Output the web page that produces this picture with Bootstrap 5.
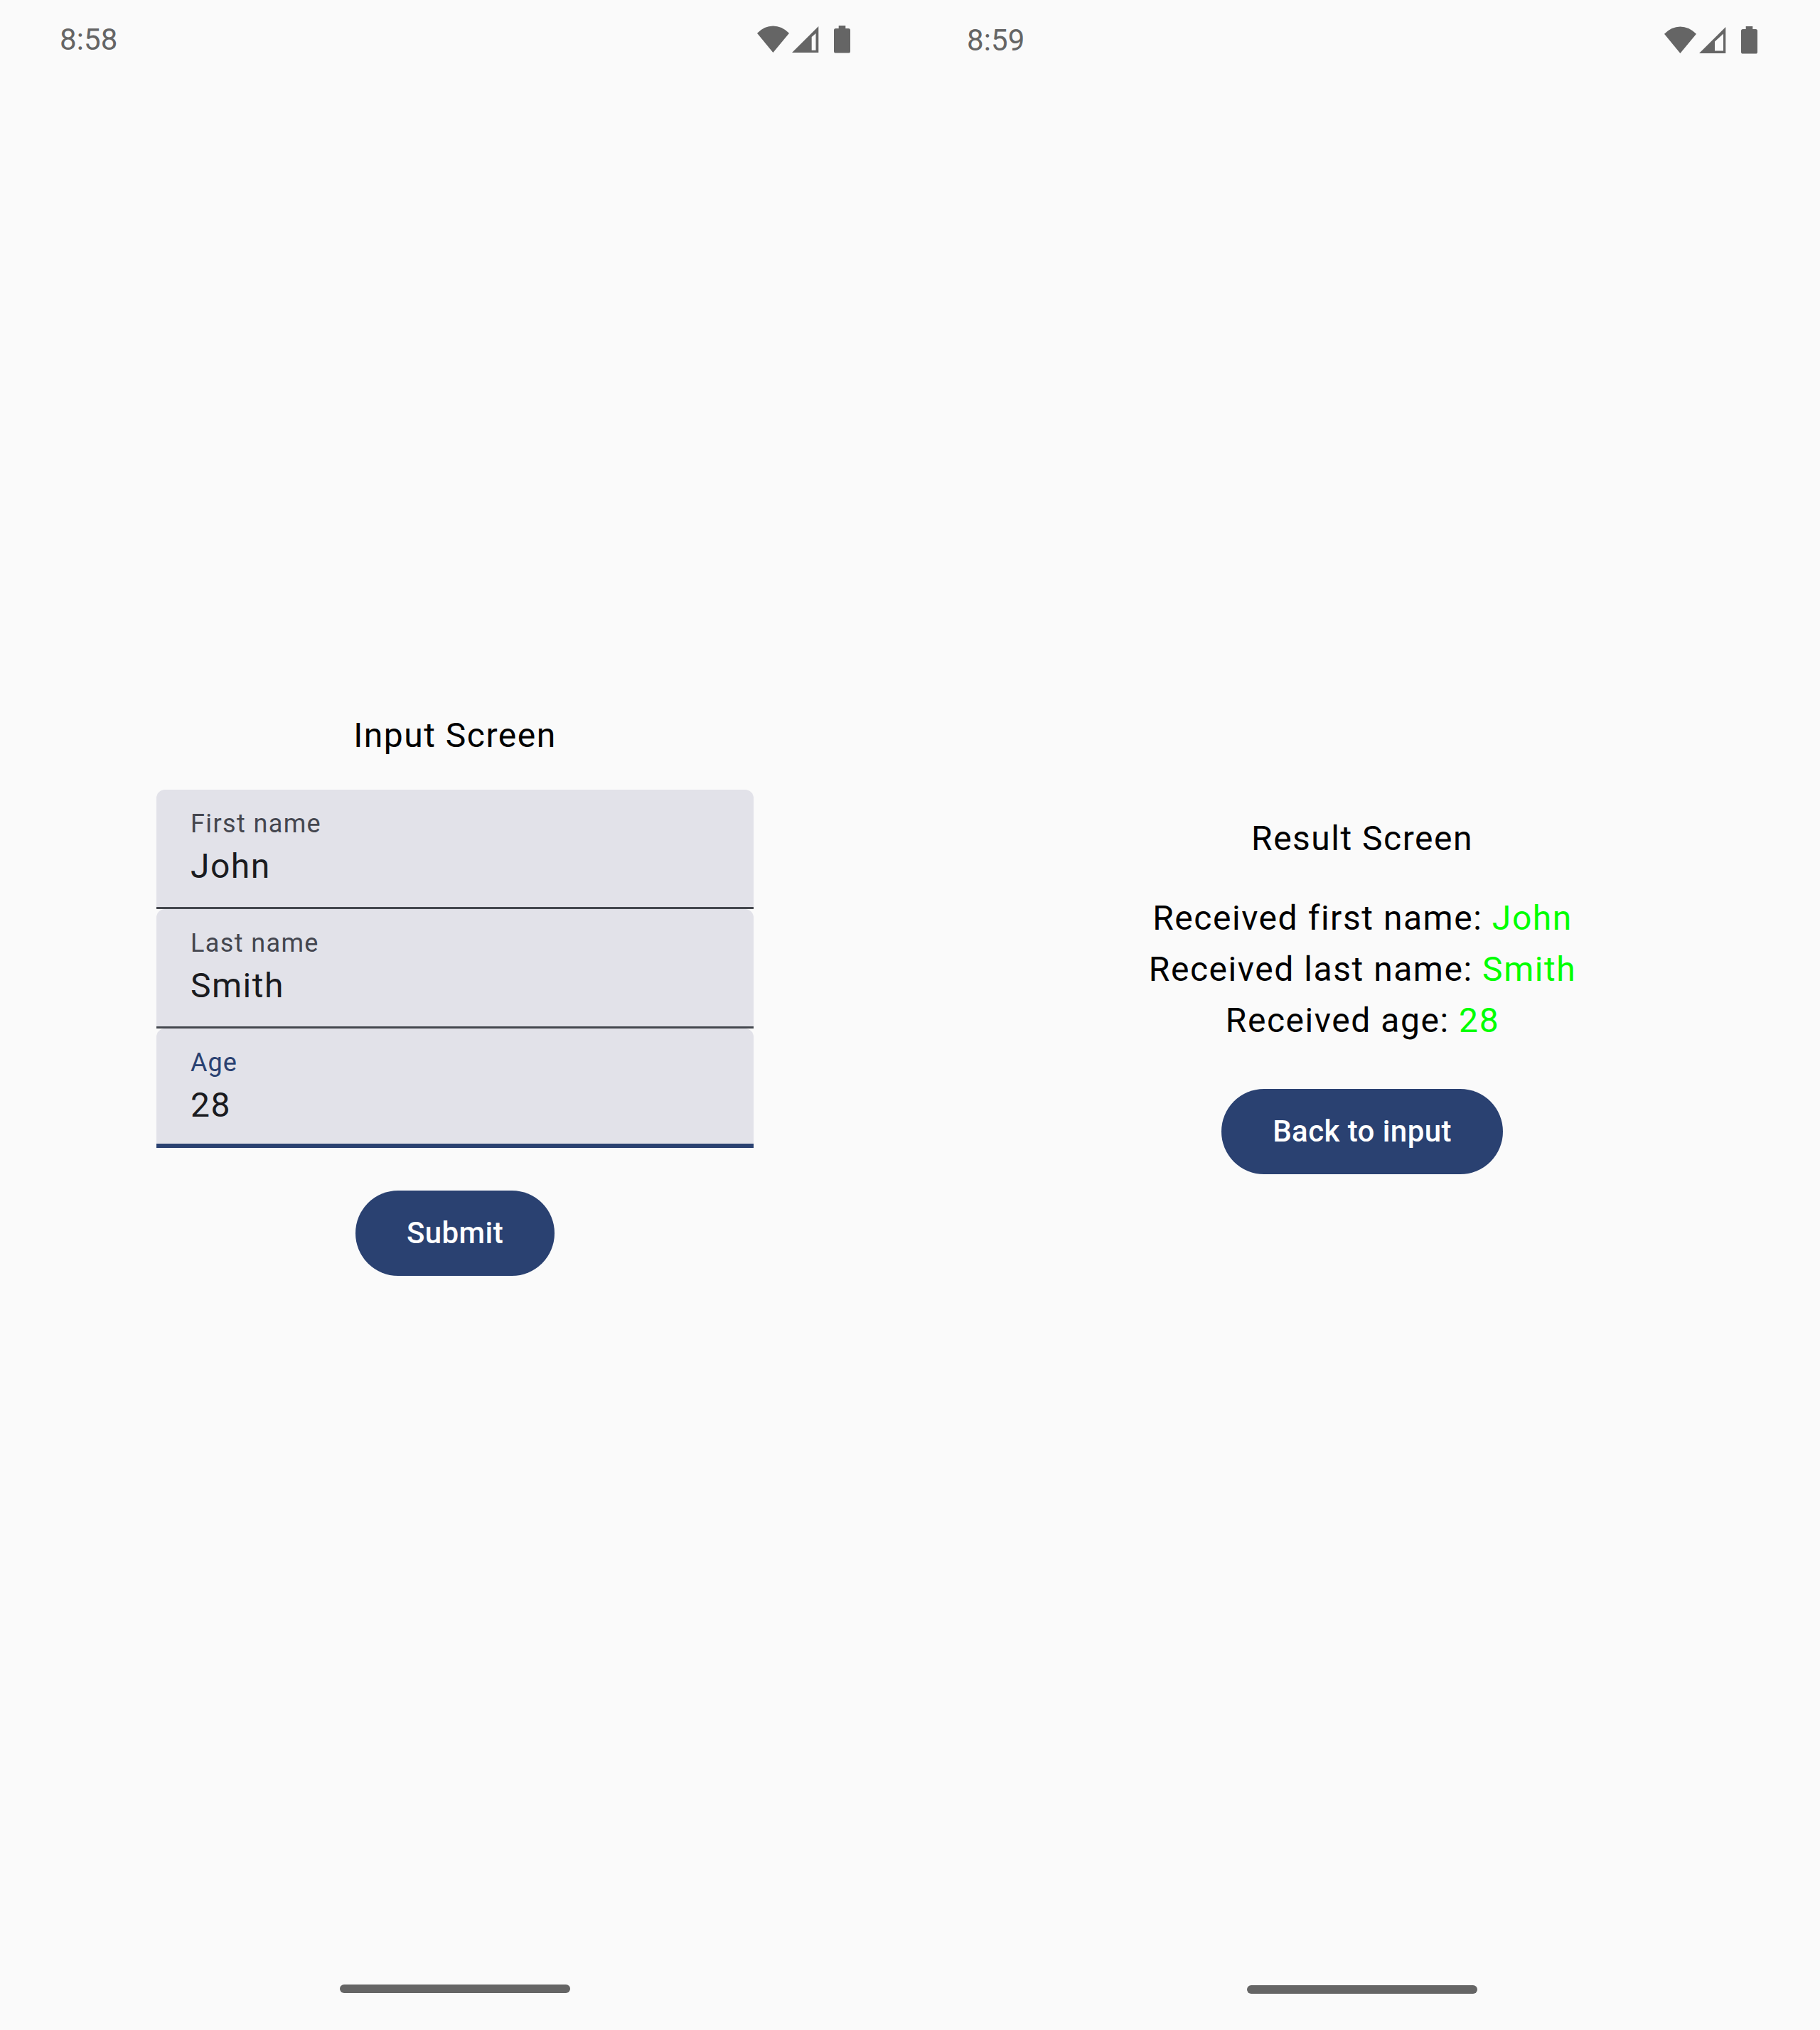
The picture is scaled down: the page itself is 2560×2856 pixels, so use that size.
<!DOCTYPE html>
<html lang="en">
<head>
<meta charset="utf-8">
<meta name="viewport" content="width=device-width, initial-scale=1">
<title>Input and Result Screens</title>
<link href="https://cdn.jsdelivr.net/npm/bootstrap@5.3.0/dist/css/bootstrap.min.css" rel="stylesheet">
<style>
  body { background: #fafafa; font-family: Roboto, sans-serif; color: #000; font-size: 48px; line-height: 72px; letter-spacing: 1.5px; font-weight: 400; }
  .phone { width: 1280px; height: 2856px; }
  .phone-second { margin-left: -4px; padding-top: 1px; }
  .status-bar { height: 112px; padding: 0 84px 0 84px; color: #656565; font-size: 42px; line-height: 112px; letter-spacing: .1px; }
  .status-icons { fill: #656565; }
  .icon-battery { margin-left: 21px; }
  .stage { height: 2570px; }
  .screen-title { margin-bottom: 40px; }
  .result-line { letter-spacing: 1.54px; padding-left: 1px; }
  .fields { width: 840px; }
  .field { height: 168px; padding: 24px 48px 0; background: #e2e2e9; border-radius: 12px 12px 0 0; position: relative; }
  .field::after { content: ""; position: absolute; left: 0; right: 0; bottom: 0; height: 3px; background: #44474e; }
  .field-label { font-size: 36px; line-height: 48px; letter-spacing: 1.38px; color: #44464f; }
  .field-value { color: #1a1b20; }
  .field-active .field-label { color: #2a4171; letter-spacing: 1px; }
  .field-active::after { height: 6px; background: #2a4171; }
  .btn-filled { --bs-btn-bg: #2a4171; --bs-btn-color: #fff; --bs-btn-hover-bg: #2a4171; --bs-btn-hover-color: #fff; margin-top: 60px; height: 120px; padding: 0 72px; border: 0; font-size: 42px; font-weight: 500; line-height: 120px; letter-spacing: .42px; }
  .received { color: #00ff00; }
  .home-pill { width: 324px; height: 12px; margin-top: 110px; background: #656565; }
</style>
</head>
<body>
<div class="d-flex overflow-hidden">
  <section class="phone flex-shrink-0 d-flex flex-column align-items-center">
    <header class="status-bar w-100 d-flex justify-content-between">
      <span>8:58</span>
      <div class="status-icons d-flex align-items-center">
        <svg width="45" height="40" viewBox="0 0 45 40"><path d="M22.4 38 0 10.7Q10 .5 22.4 .5T45 10.7Z"/></svg>
        <svg class="ms-1" width="38" height="40" viewBox="0 0 38 40"><path fill-rule="evenodd" d="M0 38 37.3 1V38ZM27.7 34.7H33.5V11L27.7 16Z"/></svg>
        <svg class="icon-battery" width="23" height="40" viewBox="0 0 23 40"><path d="M6.7 0H16.3V4H20.5Q23 4 23 6.5V36Q23 38.6 20.5 38.6H2.5Q0 38.6 0 36V6.5Q0 4 2.5 4H6.7Z"/></svg>
      </div>
    </header>
    <main class="stage w-100 d-flex flex-column align-items-center justify-content-center">
      <div class="screen-title">Input Screen</div>
      <div class="fields">
        <div class="field"><div class="field-label">First name</div><div class="field-value">John</div></div>
        <div class="field"><div class="field-label">Last name</div><div class="field-value">Smith</div></div>
        <div class="field field-active"><div class="field-label">Age</div><div class="field-value">28</div></div>
      </div>
      <button type="button" class="btn btn-filled rounded-pill">Submit</button>
    </main>
    <div class="home-pill rounded-pill"></div>
  </section>

  <section class="phone phone-second flex-shrink-0 d-flex flex-column align-items-center">
    <header class="status-bar w-100 d-flex justify-content-between">
      <span>8:59</span>
      <div class="status-icons d-flex align-items-center">
        <svg width="45" height="40" viewBox="0 0 45 40"><path d="M22.4 38 0 10.7Q10 .5 22.4 .5T45 10.7Z"/></svg>
        <svg class="ms-1" width="38" height="40" viewBox="0 0 38 40"><path fill-rule="evenodd" d="M0 38 37.3 1V38ZM22 34.5H34V10.5L22 21.5Z"/></svg>
        <svg class="icon-battery" width="23" height="40" viewBox="0 0 23 40"><path d="M6.7 0H16.3V4H20.5Q23 4 23 6.5V36Q23 38.6 20.5 38.6H2.5Q0 38.6 0 36V6.5Q0 4 2.5 4H6.7Z"/></svg>
      </div>
    </header>
    <main class="stage w-100 d-flex flex-column align-items-center justify-content-center">
      <div class="screen-title">Result Screen</div>
      <div class="result-line">Received first name: <span class="received">John</span></div>
      <div class="result-line">Received last name: <span class="received">Smith</span></div>
      <div class="result-line">Received age: <span class="received">28</span></div>
      <button type="button" class="btn btn-filled rounded-pill">Back to input</button>
    </main>
    <div class="home-pill rounded-pill"></div>
  </section>
</div>
<script src="https://cdn.jsdelivr.net/npm/bootstrap@5.3.0/dist/js/bootstrap.bundle.min.js"></script>
</body>
</html>
